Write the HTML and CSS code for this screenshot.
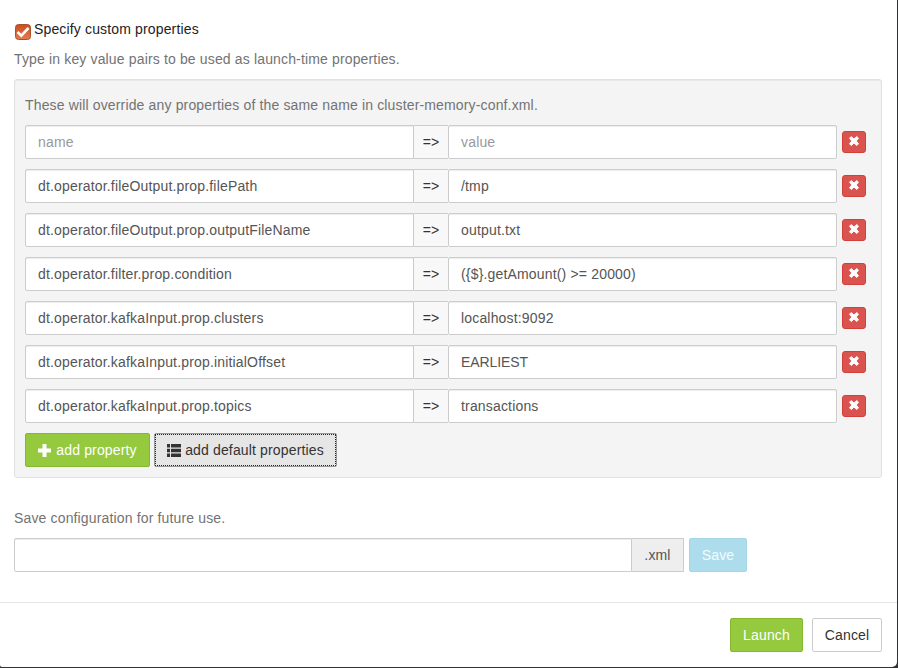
FILE: index.html
```
<!DOCTYPE html>
<html lang="en">
<head>
<meta charset="utf-8">
<title>Launch application</title>
<link rel="stylesheet" href="styles.css">
</head>
<body>
<svg class="defs" width="0" height="0">
  <symbol id="x" viewBox="0 0 12 12"><path d="M3.200 1.500 6 4 8.800 1.500 10.500 3.200 8.200 6 10.500 8.800 8.800 10.500 6 8.100 3.200 10.500 1.500 8.800 3.800 6 1.500 3.200Z" fill="#fff" stroke="#fff" stroke-width=".9" stroke-linejoin="round"/></symbol>
</svg>
<main class="modal">
  <section class="modal-body">
    <label class="toggle">
      <svg class="check" width="16" height="16" viewBox="0 0 16 16"><defs><linearGradient id="g" x1="0" y1="0" x2="0" y2="1"><stop offset="0" stop-color="#ce4b1e"/><stop offset="1" stop-color="#e57b50"/></linearGradient></defs><rect x=".5" y=".5" width="15" height="15" rx="3" fill="url(#g)" stroke="#a5532f"/><path d="M2.500 8 6.300 11.600 13.500 4" fill="none" stroke="#fff" stroke-width="2.600"/></svg>
      <span>Specify custom properties</span>
    </label>
    <p class="help intro">Type in key value pairs to be used as launch-time properties.</p>
    <div class="well">
      <p class="help note">These will override any properties of the same name in cluster-memory-conf.xml.</p>
      <div class="row"><div class="field hint">name</div><div class="arrow">=&gt;</div><div class="field hint">value</div><button class="remove" aria-label="Remove"><svg width="12" height="12"><use href="#x"/></svg></button></div>
      <div class="row"><div class="field">dt.operator.fileOutput.prop.filePath</div><div class="arrow">=&gt;</div><div class="field">/tmp</div><button class="remove" aria-label="Remove"><svg width="12" height="12"><use href="#x"/></svg></button></div>
      <div class="row"><div class="field">dt.operator.fileOutput.prop.outputFileName</div><div class="arrow">=&gt;</div><div class="field">output.txt</div><button class="remove" aria-label="Remove"><svg width="12" height="12"><use href="#x"/></svg></button></div>
      <div class="row"><div class="field">dt.operator.filter.prop.condition</div><div class="arrow">=&gt;</div><div class="field">({$}.getAmount() &gt;= 20000)</div><button class="remove" aria-label="Remove"><svg width="12" height="12"><use href="#x"/></svg></button></div>
      <div class="row"><div class="field">dt.operator.kafkaInput.prop.clusters</div><div class="arrow">=&gt;</div><div class="field">localhost:9092</div><button class="remove" aria-label="Remove"><svg width="12" height="12"><use href="#x"/></svg></button></div>
      <div class="row"><div class="field">dt.operator.kafkaInput.prop.initialOffset</div><div class="arrow">=&gt;</div><div class="field caps">EARLIEST</div><button class="remove" aria-label="Remove"><svg width="12" height="12"><use href="#x"/></svg></button></div>
      <div class="row"><div class="field">dt.operator.kafkaInput.prop.topics</div><div class="arrow">=&gt;</div><div class="field">transactions</div><button class="remove" aria-label="Remove"><svg width="12" height="12"><use href="#x"/></svg></button></div>
      <div class="actions">
        <button class="btn green add"><svg width="13" height="13" viewBox="0 0 13 13"><path d="M4.500 0h4v4.500H13v4H8.500V13h-4V8.500H0v-4h4.500Z" fill="#fff"/></svg><span>add property</span></button>
        <button class="btn focused"><svg width="14" height="13" viewBox="0 0 14 13"><path d="M0 0h3v3.500H0ZM4 0h10v3.500H4ZM0 4.700h3v3.500H0ZM4 4.700h10v3.500H4ZM0 9.500h3V13H0ZM4 9.500h10V13H4Z" fill="#333"/></svg><span>add default properties</span></button>
      </div>
    </div>
    <p class="help save-note">Save configuration for future use.</p>
    <div class="save-row"><div class="field filename"></div><div class="suffix">.xml</div><button class="btn save">Save</button></div>
  </section>
  <footer class="modal-footer"><button class="btn green launch">Launch</button><button class="btn cancel">Cancel</button></footer>
</main>
</body>
</html>
```
FILE: styles.css
```
* { box-sizing: border-box; }
body {
  margin: 0;
  height: 668px;
  overflow: hidden;
  background: #303234;
  color: #333;
  font: 14px/20px "Liberation Sans", Arial, sans-serif;
  letter-spacing: .15px;
}
.defs { position: absolute; }
p { margin: 0; }
svg { display: block; flex: none; }
.modal {
  width: 897px;
  height: 667px;
  background: #fff;
  border-radius: 0 0 5px 2px;
}
.modal-body { height: 602px; padding: 19px 15px 0 14px; }
.toggle { display: flex; height: 20px; color: #222; }
.check { margin: 5px 3px -1px 1px; }
.help { color: #737373; }
.intro { margin-top: 10px; }
.well {
  height: 399px;
  margin-top: 10px;
  padding: 15px 10px 0;
  border: 1px solid #e1e1e1;
  border-radius: 3px;
  background: #f4f4f4;
  box-shadow: inset 0 1px 1px rgba(0, 0, 0, .05);
}
.note { margin-bottom: 10px; }
.row { display: flex; align-items: center; height: 34px; margin-bottom: 10px; }
.field {
  width: 389px;
  height: 34px;
  padding: 6px 12px;
  border: 1px solid #ccc;
  border-radius: 2px;
  background: #fff;
  color: #555;
  letter-spacing: .17px;
  box-shadow: inset 0 1px 1px rgba(0, 0, 0, .075);
}
.row .field:first-child { border-radius: 2px 0 0 2px; }
.hint { color: #999; }
.caps { letter-spacing: -.1px; }
.arrow {
  width: 34px;
  height: 34px;
  padding-top: 6px;
  border: solid #ccc;
  border-width: 1px 0;
  background: #f8f8f8;
  text-align: center;
  letter-spacing: 0;
}
button { font: inherit; letter-spacing: inherit; margin: 0; }
.remove {
  display: flex;
  width: 24px;
  height: 22px;
  margin-left: 5px;
  padding: 3px 5px;
  border: 1px solid #d43f3a;
  border-radius: 3px;
  background: #d9534f;
}
.actions { display: flex; gap: 4px; }
.btn {
  display: flex;
  align-items: center;
  justify-content: center;
  height: 34px;
  padding: 0;
  border: 1px solid #ccc;
  border-radius: 2px;
  background: #fff;
  color: #333;
}
.green { border-color: #85b82f; background: #95ca3e; color: #fff; }
.add { width: 125px; gap: 5px; }
.focused {
  width: 183px;
  gap: 4px;
  border-color: #999;
  background: #e6e6e6;
  outline: 1px dotted #222;
  outline-offset: -2px;
}
.save-note { margin-top: 30px; }
.save-row { display: flex; margin-top: 10px; }
.filename { width: 618px; border-radius: 2px 0 0 2px; }
.suffix {
  width: 52px;
  height: 34px;
  padding-top: 6px;
  border: 1px solid #ccc;
  border-left: 0;
  background: #eee;
  color: #555;
  text-align: center;
}
.save {
  width: 58px;
  margin-left: 5px;
  border-color: #a3d7e6;
  background: #adddec;
  color: #f4fbfd;
}
.modal-footer {
  display: flex;
  justify-content: flex-end;
  gap: 9px;
  height: 65px;
  padding: 15px 15px 0;
  border-top: 1px solid #e5e5e5;
}
.launch { width: 73px; }
.cancel { width: 70px; }
```
